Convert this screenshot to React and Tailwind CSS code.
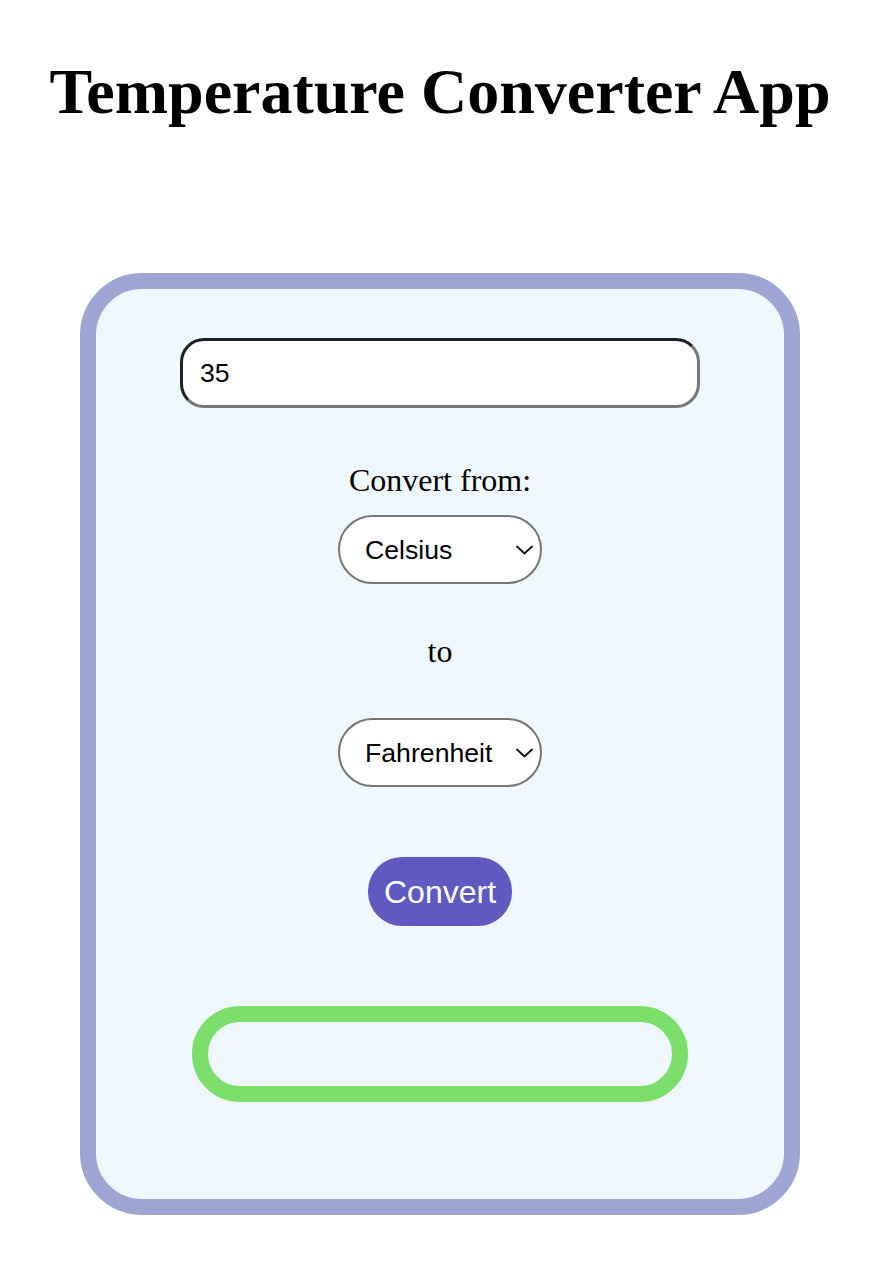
import React from "react";

function Chevron() {
  return (
    <svg
      className="pointer-events-none absolute right-[9px] top-1/2 -translate-y-1/2"
      width="17"
      height="10"
      viewBox="0 0 17 10"
      fill="none"
    >
      <path d="M1 1.5 L8.5 8.5 L16 1.5" stroke="#111" strokeWidth="1.8" strokeLinecap="round" strokeLinejoin="round" />
    </svg>
  );
}

function Select({ value, options }) {
  return (
    <div className="relative w-[204px] h-[69px]">
      <select
        defaultValue={value}
        className="appearance-none w-full h-full rounded-full border-2 border-solid border-[#767676] bg-white pl-[25px] pr-[30px] text-[26.67px] text-black outline-none"
        style={{ fontFamily: '"Liberation Sans", Arial, sans-serif' }}
      >
        {options.map((o) => (
          <option key={o} value={o}>
            {o}
          </option>
        ))}
      </select>
      <Chevron />
    </div>
  );
}

export default function App() {
  const opts = ["Celsius", "Fahrenheit", "Kelvin"];
  return (
    <div
      className="min-h-[1278px] bg-white pl-[4px] flex flex-col items-center"
      style={{ fontFamily: '"Liberation Serif", "Times New Roman", serif' }}
    >
      <h1 className="mt-[55px] text-[64px] leading-[74px] font-bold text-black text-center">
        Temperature Converter App
      </h1>

      <div className="mt-[144px] w-[720px] rounded-[62px] border-[16px] border-solid border-[#9fa5d2] bg-[#f0f8ff] flex flex-col items-center pb-[97px]">
        <input
          type="text"
          defaultValue="35"
          className="mt-[49px] w-[520px] h-[70px] rounded-[24px] border-[3px] border-solid border-t-[#202020] border-l-[#202020] border-b-[#777777] border-r-[#777777] bg-white pl-[17px] text-[26.67px] text-black outline-none"
          style={{ fontFamily: '"Liberation Sans", Arial, sans-serif' }}
        />

        <label className="mt-[54px] text-[32px] leading-[36px] text-black">Convert from:</label>
        <div className="mt-[17px]">
          <Select value="Celsius" options={opts} />
        </div>

        <p className="mt-[49px] text-[32px] leading-[36px] text-black">to</p>
        <div className="mt-[49px]">
          <Select value="Fahrenheit" options={opts} />
        </div>

        <button
          className="mt-[70px] h-[69px] px-[16px] rounded-[34px] bg-[#5f5abf] text-white text-[32px]"
          style={{ fontFamily: '"Liberation Sans", Arial, sans-serif' }}
        >
          Convert
        </button>

        <div className="mt-[80px] w-[496px] h-[96px] rounded-full border-[16px] border-solid border-[#7ddf6b]" />
      </div>
    </div>
  );
}
